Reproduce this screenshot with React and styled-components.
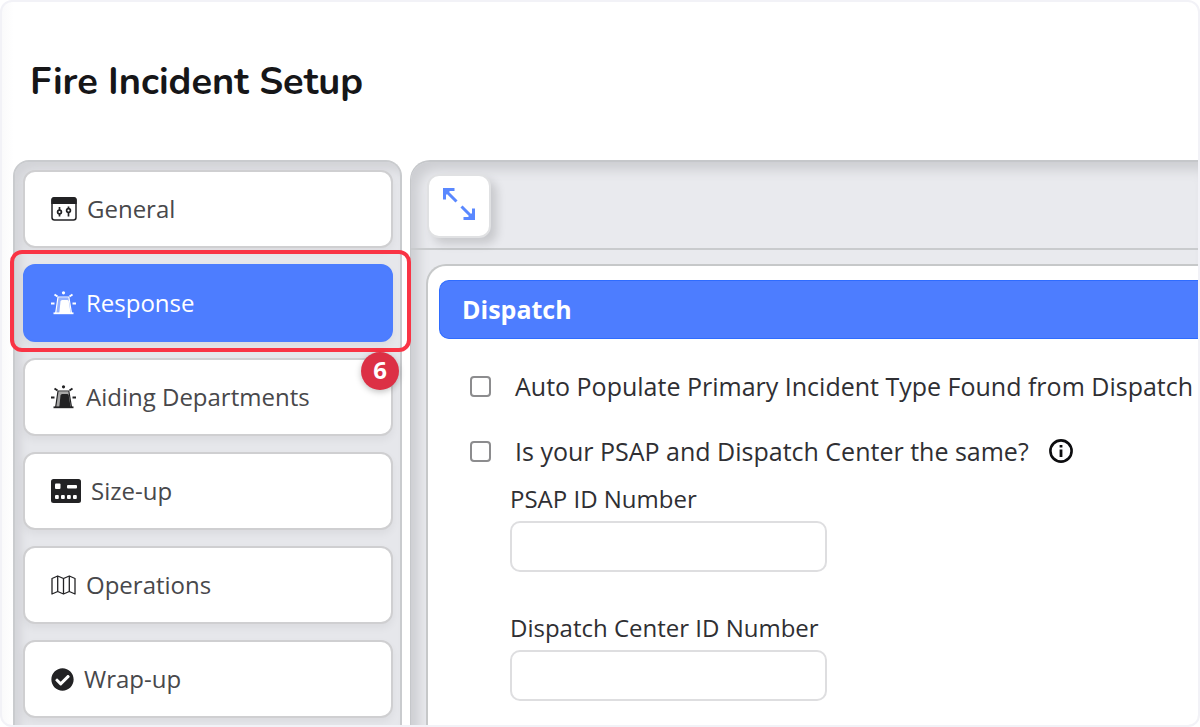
import React from "react";
import styled, { createGlobalStyle } from "styled-components";
import { FaCheckCircle } from "react-icons/fa";

const GlobalStyle = createGlobalStyle`
  *, *::before, *::after { box-sizing: border-box; }
  body {
    margin: 0;
    background: #ffffff;
    color: #2f2f33;
    font-family: "Open Sans", "Noto Sans", sans-serif;
    font-size: 24px;
    line-height: 32px;
  }
`;

const Frame = styled.div`
  height: 100vh;
  display: flex;
  flex-direction: column;
  overflow: hidden;
  border: 2px solid #f2f2f7;
  border-radius: 12px;
  background: linear-gradient(to right, #fafafb, #ffffff 12px);
`;

const Header = styled.header`
  padding: 56px 28px 54px;
`;

const Title = styled.h1`
  margin: 0;
  color: #161618;
  font-family: "Nunito", "Open Sans", sans-serif;
  font-size: 38px;
  font-weight: 700;
  line-height: 48px;
`;

const Body = styled.div`
  flex: 1;
  display: flex;
  gap: 8px;
  padding-left: 11px;
`;

const Sidebar = styled.nav`
  flex: none;
  width: 389px;
  padding: 8px 7px 8px 8px;
  border: 2px solid #c9cbce;
  border-bottom: 0;
  border-radius: 16px 16px 0 0;
  background: #e6e7eb;
  box-shadow: inset 6px 8px 8px #d3d4d8;
`;

const NavList = styled.ul`
  display: flex;
  flex-direction: column;
  gap: 16px;
  margin: 0;
  padding: 0;
  list-style: none;
`;

const NavEntry = styled.li`
  position: relative;
`;

const NavButton = styled.button`
  display: flex;
  align-items: center;
  gap: 10px;
  width: 100%;
  height: 78px;
  padding: 0 26px;
  border: 2px solid ${(p) => (p.$active ? "#4c7dff" : "#cfcfd1")};
  border-radius: 12px;
  background: ${(p) => (p.$active ? "#4d7dff" : "#ffffff")};
  color: ${(p) => (p.$active ? "#ffffff" : "#48484b")};
  box-shadow: 0 4px 8px rgba(0, 0, 0, 0.05);
  font: inherit;
  font-weight: ${(p) => (p.$active ? 500 : 400)};
  text-align: left;
  cursor: pointer;

  svg {
    flex: none;
    color: ${(p) => (p.$active ? "#ffffff" : "#222224")};
  }
`;

const Highlight = styled.span`
  position: absolute;
  inset: -14px -18px -10px -13px;
  border: 4px solid #f93445;
  border-radius: 12px;
  pointer-events: none;
`;

const Badge = styled.span`
  position: absolute;
  top: -6px;
  right: -6px;
  width: 38px;
  height: 38px;
  border-radius: 50%;
  background: #dc3045;
  box-shadow: 0 2px 6px rgba(0, 0, 0, 0.25);
  color: #ffffff;
  font-size: 24px;
  font-weight: 700;
  line-height: 36px;
  text-align: center;
`;

const Panel = styled.main`
  flex: 1;
  min-width: 0;
  display: flex;
  flex-direction: column;
  border: 2px solid #c5c7ca;
  border-width: 2px 0 0 1px;
  border-radius: 20px 0 0 0;
  background: #e9eaee;
  box-shadow: inset 8px 8px 12px #cdced2;
`;

const Toolbar = styled.div`
  display: flex;
  padding: 12px 16px 10px;
  border-bottom: 2px solid #c9cbcd;
`;

const ExpandButton = styled.button`
  display: flex;
  align-items: center;
  justify-content: center;
  width: 64px;
  height: 64px;
  padding: 0 0 4px;
  border: 2px solid #e0e1e3;
  border-radius: 12px;
  background: #ffffff;
  box-shadow: 6px 6px 10px rgba(0, 0, 0, 0.14);
  color: #5a88ff;
  cursor: pointer;
`;

const Card = styled.section`
  flex: 1;
  margin: 14px 0 0 15px;
  padding: 14px 0 0 11px;
  border: 2px solid #c6c8c9;
  border-width: 2px 0 0 2px;
  border-radius: 20px 0 0 0;
  background: #ffffff;
`;

const CardTitle = styled.h2`
  margin: 0;
  padding: 12px 22px 13px;
  border: 1px solid #2f6cff;
  border-width: 1px 0 1px 1px;
  border-radius: 10px 0 0 10px;
  background: #4d7dff;
  color: #ffffff;
  font-size: 25px;
  font-weight: 700;
  line-height: 32px;
`;

const Form = styled.form`
  display: flex;
  flex-direction: column;
  padding: 31px 0 0 31px;
`;

const CheckRow = styled.div`
  display: flex;
  align-items: center;
  height: 32px;
  margin-bottom: ${(p) => (p.$last ? 16 : 33)}px;
  font-size: 25px;
  white-space: nowrap;
`;

const Checkbox = styled.input.attrs({ type: "checkbox" })`
  appearance: none;
  flex: none;
  width: 21px;
  height: 21px;
  margin: 0 24px 0 0;
  border: 2px solid #8c8c8e;
  border-radius: 4px;
  background: #ffffff;

  &:checked {
    border-color: #4d7dff;
    background: #4d7dff;
  }
`;

const InfoButton = styled.button`
  display: flex;
  margin: 0 0 0 20px;
  padding: 0;
  border: 0;
  background: none;
  color: #0d0d0f;
  cursor: pointer;
`;

const Field = styled.div`
  display: flex;
  flex-direction: column;
  gap: 6px;
  margin: 0 0 40px 40px;
`;

const TextInput = styled.input.attrs({ type: "text" })`
  width: 317px;
  max-width: 100%;
  height: 51px;
  padding: 0 14px;
  border: 2px solid #dedee0;
  border-radius: 10px;
  background: #ffffff;
  font: inherit;
`;

function SlidersWindowIcon() {
  return (
    <svg width="26" height="26" viewBox="0 0 26 26" fill="none" aria-hidden="true">
      <rect x="1" y="2" width="24" height="22" rx="2.5" stroke="currentColor" strokeWidth="1.5" />
      <path d="M.3 8V4a3 3 0 0 1 3-3h19.400a3 3 0 0 1 3 3v4z" fill="currentColor" />
      <path d="M8.500 11v3M8.500 17.500v3M17.500 10.500v2M17.500 16v4.500" stroke="currentColor" strokeWidth="1.7" />
      <circle cx="8.5" cy="16" r="1.9" stroke="currentColor" strokeWidth="1.7" />
      <circle cx="17.5" cy="14.5" r="1.9" stroke="currentColor" strokeWidth="1.7" />
    </svg>
  );
}

function SirenIcon() {
  return (
    <svg width="25" height="26" viewBox="0 0 25 26" fill="none" aria-hidden="true">
      <circle cx="12.5" cy="2.8" r="1.6" fill="currentColor" />
      <path d="M3.500 4.500L6.500 6.500M21.500 4.500l-3 2" stroke="currentColor" strokeWidth="2" />
      <path d="M0 13.500h3.500M21.500 13.500H25" stroke="currentColor" strokeWidth="1.8" />
      <path d="M4.500 23L7 7.500h10.500L20.500 23z" fill="currentColor" fillOpacity=".4" />
      <path d="M4.700 23L7 7h10.800L20.500 23" stroke="currentColor" strokeWidth="1.2" />
      <path d="M8.300 23l1.200-11.500q.2-1.500 1.700-1.500h5q1.200 0 1.500 1.200L19.600 23z" fill="currentColor" />
      <path d="M2.500 23.300H22.500" stroke="currentColor" strokeWidth="1.8" />
    </svg>
  );
}

function ConsoleIcon() {
  return (
    <svg width="30" height="24" viewBox="0 0 30 24" aria-hidden="true">
      <rect width="30" height="24" rx="2.5" fill="currentColor" />
      <g fill="#ffffff">
        <rect x="4" y="4.5" width="5.5" height="5.5" rx="1" />
        <rect x="16" y="6" width="10" height="3.5" rx="1" />
        <rect x="4" y="16" width="3.8" height="4" rx="1" />
        <rect x="10" y="16" width="3.8" height="4" rx="1" />
        <rect x="16" y="16" width="3.8" height="4" rx="1" />
        <rect x="22" y="16" width="3.8" height="4" rx="1" />
      </g>
    </svg>
  );
}

function MapIcon() {
  return (
    <svg width="25" height="20" viewBox="0 0 25 20" fill="none" stroke="currentColor" strokeWidth="1.3" strokeLinejoin="round" aria-hidden="true">
      <path d="M1 3.500L6.700 1l5.800 2.500L18.300 1 24 3.500V19l-5.700-2.500L12.500 19l-5.800-2.500L1 19z" />
      <path d="M6.700 1v15.500M12.500 3.500V19M18.300 1v15.500" />
    </svg>
  );
}

function InfoIcon() {
  return (
    <svg width="24" height="24" viewBox="0 0 24 24" fill="none" stroke="currentColor" aria-hidden="true">
      <circle cx="12" cy="12" r="10.6" strokeWidth="2.6" />
      <path d="M12 10.500V18M12 6v2.600" strokeWidth="2.8" />
    </svg>
  );
}

function ExpandIcon() {
  return (
    <svg width="32" height="32" viewBox="0 0 32 32" fill="none" stroke="currentColor" strokeWidth="3" aria-hidden="true">
      <path d="M1.500 11.500V1.500H11.500M2 2l11.500 11.500" />
      <path d="M30.500 20.500v10H20.500M30 30L18.500 18.500" />
      <path d="M1 1h8L1 9zM31 31h-8l8-8z" fill="currentColor" stroke="none" />
    </svg>
  );
}

const sections = [
  { label: "General", icon: <SlidersWindowIcon /> },
  { label: "Response", icon: <SirenIcon />, active: true },
  { label: "Aiding Departments", icon: <SirenIcon />, count: 6 },
  { label: "Size-up", icon: <ConsoleIcon /> },
  { label: "Operations", icon: <MapIcon /> },
  { label: "Wrap-up", icon: <FaCheckCircle size={23} /> },
];

export default function App() {
  return (
    <>
      <GlobalStyle />
      <Frame>
        <Header>
          <Title>Fire Incident Setup</Title>
        </Header>
        <Body>
          <Sidebar aria-label="Setup sections">
            <NavList>
              {sections.map((s) => (
                <NavEntry key={s.label}>
                  <NavButton type="button" $active={s.active} aria-current={s.active ? "page" : undefined}>
                    {s.icon}
                    {s.label}
                  </NavButton>
                  {s.active && <Highlight />}
                  {s.count && <Badge>{s.count}</Badge>}
                </NavEntry>
              ))}
            </NavList>
          </Sidebar>
          <Panel>
            <Toolbar>
              <ExpandButton type="button" aria-label="Expand">
                <ExpandIcon />
              </ExpandButton>
            </Toolbar>
            <Card>
              <CardTitle>Dispatch</CardTitle>
              <Form>
                <CheckRow>
                  <Checkbox id="auto-populate" />
                  <label htmlFor="auto-populate">Auto Populate Primary Incident Type Found from Dispatch</label>
                </CheckRow>
                <CheckRow $last>
                  <Checkbox id="same-center" />
                  <label htmlFor="same-center">Is your PSAP and Dispatch Center the same?</label>
                  <InfoButton type="button" aria-label="More information">
                    <InfoIcon />
                  </InfoButton>
                </CheckRow>
                <Field>
                  <label htmlFor="psap-id">PSAP ID Number</label>
                  <TextInput id="psap-id" />
                </Field>
                <Field>
                  <label htmlFor="dispatch-id">Dispatch Center ID Number</label>
                  <TextInput id="dispatch-id" />
                </Field>
              </Form>
            </Card>
          </Panel>
        </Body>
      </Frame>
    </>
  );
}
